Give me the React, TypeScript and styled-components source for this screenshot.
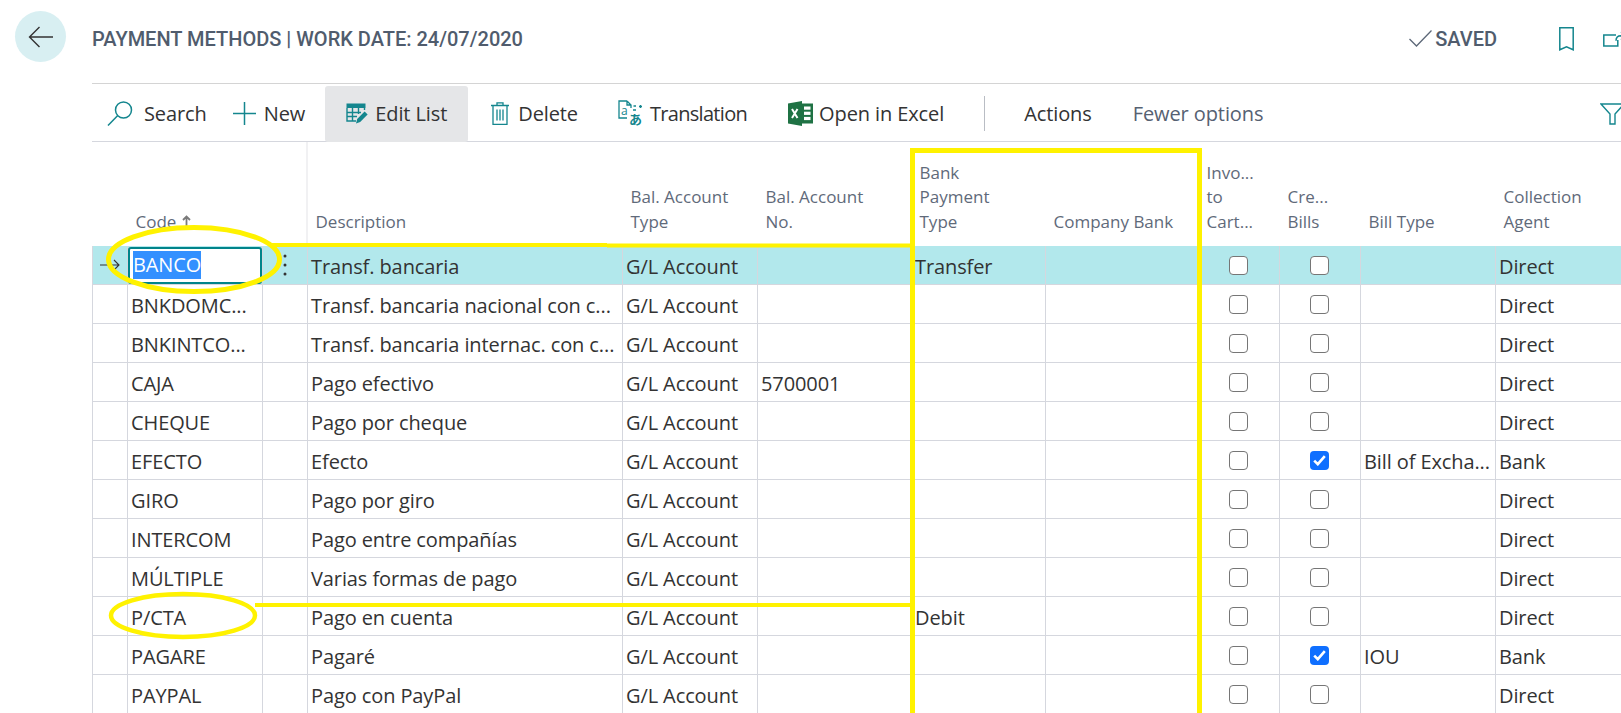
import React from 'react';
import styled, { createGlobalStyle } from 'styled-components';

const TEAL = '#14868e';
const GRID = '#d5d7de';
const COLUMNS = '36px 135px 45px 315px 135px 154px 134px 153px 81px 81px 135px 160px';

const GlobalStyle = createGlobalStyle`
  html, body {
    margin: 0;
    padding: 0;
    height: 100%;
    background: #fff;
    overflow: hidden;
  }
  body {
    font-family: "Open Sans", "Noto Sans", sans-serif;
    color: #333;
  }
  * { box-sizing: border-box; }
`;

const Page = styled.div`
  position: relative;
  display: flex;
  width: 1621px;
  height: 713px;
  overflow: hidden;
`;

const BackColumn = styled.div`
  flex: 0 0 92px;
  padding: 11px 0 0 15px;
`;

const BackButton = styled.button`
  width: 51px;
  height: 51px;
  padding: 0;
  border: 0;
  border-radius: 50%;
  background: #d8eff2;
  display: flex;
  align-items: center;
  justify-content: center;
`;

const Main = styled.main`
  flex: 0 0 1529px;
  min-width: 0;
`;

const TitleBar = styled.header`
  width: 1535px;
  height: 84px;
  display: flex;
  align-items: center;
  padding-bottom: 6px;
  border-bottom: 1px solid #d4d4d4;
`;

const Title = styled.h1`
  margin: 0;
  font-family: Roboto, "Liberation Sans", sans-serif;
  font-size: 20px;
  font-weight: 500;
  color: #505c6d;
  white-space: nowrap;
`;

const Saved = styled.div`
  margin-left: auto;
  display: flex;
  align-items: center;
  gap: 3px;
  font-family: Roboto, "Liberation Sans", sans-serif;
  font-size: 20px;
  font-weight: 500;
  color: #505c6d;
`;

const TitleIcons = styled.div`
  display: flex;
  align-items: center;
  gap: 29px;
  margin-left: 62px;
`;

const Toolbar = styled.nav`
  width: 1529px;
  height: 58px;
  padding-top: 2px;
  display: flex;
  align-items: center;
  border-bottom: 1px solid ${GRID};
  font-size: 20px;
`;

const ToolButton = styled.div<{
  $left?: number;
  $active?: boolean;
  $gap?: number;
  $muted?: boolean;
  $tight?: boolean;
}>`
  height: ${(p) => (p.$active ? '56px' : 'auto')};
  margin-left: ${(p) => p.$left ?? 0}px;
  padding: 0 ${(p) => (p.$active ? 21 : 0)}px;
  display: flex;
  align-items: center;
  gap: ${(p) => p.$gap ?? 8}px;
  white-space: nowrap;
  border-radius: 3px;
  background: ${(p) => (p.$active ? '#e5e6e8' : 'transparent')};
  color: ${(p) => (p.$muted ? '#566172' : '#333')};
  letter-spacing: ${(p) => (p.$tight ? '-0.7px' : '-0.1px')};
`;

const ToolDivider = styled.div`
  width: 1px;
  height: 35px;
  margin-left: 40px;
  background: #b9bdc4;
`;

const FilterSlot = styled.div`
  margin-left: auto;
  margin-right: -4px;
  display: flex;
`;

const HeaderRow = styled.div`
  display: grid;
  grid-template-columns: ${COLUMNS};
  height: 104px;
`;

const HeaderCell = styled.div<{ $divider?: boolean }>`
  display: flex;
  flex-direction: column;
  justify-content: flex-end;
  padding: 0 0 12px 7.5px;
  font-size: 17px;
  line-height: 24.4px;
  color: #5f6a7a;
  white-space: nowrap;
  border-right: ${(p) => (p.$divider ? '2px solid #f1f1f3' : '0')};
`;

const SortLabel = styled.span`
  display: flex;
  align-items: center;
  gap: 6px;
`;

const Row = styled.div<{ $current?: boolean }>`
  display: grid;
  grid-template-columns: ${COLUMNS};
  height: 39px;
  background: ${(p) => (p.$current ? '#b2e8ec' : '#fff')};
`;

const Cell = styled.div<{ $first?: boolean; $center?: boolean }>`
  display: flex;
  align-items: center;
  justify-content: ${(p) => (p.$center ? 'center' : 'flex-start')};
  min-width: 0;
  padding: ${(p) => (p.$center ? '0 1px 0 0' : '2px 0 0 3px')};
  font-size: 20px;
  letter-spacing: -0.1px;
  color: #333;
  white-space: nowrap;
  overflow: hidden;
  border-right: 1px solid ${GRID};
  border-bottom: 1px solid ${GRID};
  border-left: ${(p) => (p.$first ? `1px solid ${GRID}` : '0')};
`;

const CodeInput = styled.div`
  width: 134px;
  height: 37px;
  margin: -2px 0 0 -3px;
  padding-left: 3px;
  display: flex;
  align-items: center;
  background: #fff;
  border: 2px solid #00848a;
  border-radius: 3px;
`;

const Selection = styled.span`
  height: 28px;
  line-height: 28px;
  background: #3390ff;
  color: #fff;
`;

const Check = styled.span<{ $on?: boolean }>`
  width: 19px;
  height: 19px;
  display: flex;
  align-items: center;
  justify-content: center;
  border-radius: 4px;
  background: ${(p) => (p.$on ? '#0f6fff' : '#fff')};
  border: ${(p) => (p.$on ? '0' : '1.5px solid #767676')};
`;

const Annotations = styled.svg`
  position: absolute;
  top: 0;
  left: 0;
  pointer-events: none;
`;

type Method = {
  code: string;
  description: string;
  no?: string;
  bank?: string;
  credit?: boolean;
  billType?: string;
  agent: string;
};

const methods: Method[] = [
  { code: 'BANCO', description: 'Transf. bancaria', bank: 'Transfer', agent: 'Direct' },
  { code: 'BNKDOMC...', description: 'Transf. bancaria nacional con c...', agent: 'Direct' },
  { code: 'BNKINTCO...', description: 'Transf. bancaria internac. con c...', agent: 'Direct' },
  { code: 'CAJA', description: 'Pago efectivo', no: '5700001', agent: 'Direct' },
  { code: 'CHEQUE', description: 'Pago por cheque', agent: 'Direct' },
  { code: 'EFECTO', description: 'Efecto', credit: true, billType: 'Bill of Excha...', agent: 'Bank' },
  { code: 'GIRO', description: 'Pago por giro', agent: 'Direct' },
  { code: 'INTERCOM', description: 'Pago entre compañías', agent: 'Direct' },
  { code: 'MÚLTIPLE', description: 'Varias formas de pago', agent: 'Direct' },
  { code: 'P/CTA', description: 'Pago en cuenta', bank: 'Debit', agent: 'Direct' },
  { code: 'PAGARE', description: 'Pagaré', credit: true, billType: 'IOU', agent: 'Bank' },
  { code: 'PAYPAL', description: 'Pago con PayPal', agent: 'Direct' },
];

const headers: string[][] = [
  ['Bal. Account', 'Type'],
  ['Bal. Account', 'No.'],
  ['Bank', 'Payment', 'Type'],
  ['Company Bank'],
  ['Invo...', 'to', 'Cart...'],
  ['Cre...', 'Bills'],
  ['Bill Type'],
  ['Collection', 'Agent'],
];

const BackArrow = () => (
  <svg width="26" height="22" viewBox="0 0 26 22" fill="none" stroke="#333" strokeWidth="1.4">
    <path d="M1.5 11H25M11.5 1L1.5 11l10 10" />
  </svg>
);

const SearchIcon = () => (
  <svg width="26" height="25" viewBox="0 0 26 25" fill="none" stroke={TEAL} strokeWidth="1.5">
    <circle cx="16.5" cy="9" r="8" />
    <path d="M10.5 14.8L1 24.5" />
  </svg>
);

const PlusIcon = () => (
  <svg width="23" height="23" viewBox="0 0 23 23" fill="none" stroke={TEAL} strokeWidth="1.5">
    <path d="M0 11.5h23M11.5 0v23" />
  </svg>
);

const EditListIcon = () => (
  <svg width="22" height="21" viewBox="0 0 22 21" fill="none">
    <rect x="0.5" y="0.5" width="19" height="4.5" fill={TEAL} />
    <path
      d="M1 5v13h9M1 9.5h14M1 13.5h10M6.5 5v13M12.5 5v6M18.5 5v2"
      stroke={TEAL}
      strokeWidth="1.4"
    />
    <path d="M10 20.5l1.2-4.6 7.4-7.4 3 3-7.4 7.4z" fill={TEAL} />
  </svg>
);

const TrashIcon = () => (
  <svg width="18" height="23" viewBox="0 0 18 23" fill="none" stroke={TEAL} strokeWidth="1.3">
    <path d="M0 3.5h18M6 3.5V.8h6v2.7M2 3.5v18.8h14V3.5M6 7.5v11M9 7.5v11M12 7.5v11" />
  </svg>
);

const TranslationIcon = () => (
  <svg width="25" height="28" viewBox="0 0 25 28" fill="none" stroke={TEAL} strokeWidth="1.3">
    <path d="M9 1H1v17h8M9 1l4 4v3M9 1v4h4" />
    <path d="M15.5 6h2.5M21 6.5h3M22.5 5v3M15 10h3" />
    <text x="3" y="15" fontSize="12" fill={TEAL} stroke="none" fontFamily='"Open Sans", sans-serif'>
      a
    </text>
    <text x="11" y="24" fontSize="13" fontWeight="700" fill={TEAL} stroke="none" fontFamily='"Noto Sans CJK JP", sans-serif'>
      あ
    </text>
  </svg>
);

const ExcelIcon = () => (
  <svg width="25" height="25" viewBox="0 0 25 25">
    <rect x="9" y="2.5" width="16" height="20" fill="#1f7244" />
    <rect x="16" y="5.5" width="6.5" height="3.2" fill="#fff" />
    <rect x="16" y="10.7" width="6.5" height="3.2" fill="#fff" />
    <rect x="16" y="15.9" width="6.5" height="3.2" fill="#fff" />
    <path d="M0 2.5L14 0v25L0 22.5z" fill="#1f7244" />
    <path d="M4 8l5.5 9M9.5 8L4 17" stroke="#fff" strokeWidth="2" />
  </svg>
);

const CheckMark = () => (
  <svg width="23" height="17" viewBox="0 0 23 17" fill="none" stroke="#5d6878" strokeWidth="1.3">
    <path d="M0.5 9l7 7L22.5 0.5" />
  </svg>
);

const BookmarkIcon = () => (
  <svg width="15" height="24" viewBox="0 0 15 24" fill="none" stroke={TEAL} strokeWidth="1.5">
    <path d="M.8.8h13.4v22l-6.7-3-6.7 3z" />
  </svg>
);

const ShareIcon = () => (
  <svg width="24" height="16" viewBox="0 0 24 16" fill="none" stroke={TEAL} strokeWidth="1.5">
    <path d="M13 4H.8v11h14V9M18 .8l5 4-5 4M23 4.8h-5c-3 0-5 2-5 5" />
  </svg>
);

const FilterIcon = () => (
  <svg width="25" height="22" viewBox="0 0 25 22" fill="none" stroke={TEAL} strokeWidth="1.4">
    <path d="M1 1h23l-9 10v10h-5V11z" />
  </svg>
);

const SortArrow = () => (
  <svg width="9" height="13" viewBox="0 0 9 13" fill="none" stroke="#7a7a7a" strokeWidth="1.8">
    <path d="M4.5 13V1.5M1 5l3.5-3.5L8 5" />
  </svg>
);

const RowArrow = () => (
  <svg width="20" height="12" viewBox="0 0 20 12" fill="none" stroke="#333" strokeWidth="1.1">
    <path d="M0 6h19M14 1l5 5-5 5" />
  </svg>
);

const Kebab = () => (
  <svg width="4" height="24" viewBox="0 0 4 24" fill="#333">
    <circle cx="2" cy="3" r="1.5" />
    <circle cx="2" cy="12" r="1.5" />
    <circle cx="2" cy="21" r="1.5" />
  </svg>
);

const Tick = () => (
  <svg width="13" height="11" viewBox="0 0 13 11" fill="none" stroke="#fff" strokeWidth="2.6">
    <path d="M1.2 5.6l3.6 3.6L11.8 1.2" />
  </svg>
);

function App() {
  return (
    <Page>
      <GlobalStyle />
      <BackColumn>
        <BackButton aria-label="Back">
          <BackArrow />
        </BackButton>
      </BackColumn>

      <Main>
        <TitleBar>
          <Title>PAYMENT METHODS | WORK DATE: 24/07/2020</Title>
          <Saved>
            <CheckMark />
            SAVED
          </Saved>
          <TitleIcons>
            <BookmarkIcon />
            <ShareIcon />
          </TitleIcons>
        </TitleBar>

        <Toolbar>
          <ToolButton $left={15} $gap={11}>
            <SearchIcon />
            Search
          </ToolButton>
          <ToolButton $left={26}>
            <PlusIcon />
            New
          </ToolButton>
          <ToolButton $left={20} $active $gap={7}>
            <EditListIcon />
            Edit List
          </ToolButton>
          <ToolButton $left={23} $gap={9}>
            <TrashIcon />
            Delete
          </ToolButton>
          <ToolButton $left={40} $gap={7} $tight>
            <TranslationIcon />
            Translation
          </ToolButton>
          <ToolButton $left={41} $gap={6}>
            <ExcelIcon />
            Open in Excel
          </ToolButton>
          <ToolDivider />
          <ToolButton $left={39}>Actions</ToolButton>
          <ToolButton $left={41} $muted>
            Fewer options
          </ToolButton>
          <FilterSlot>
            <FilterIcon />
          </FilterSlot>
        </Toolbar>

        <HeaderRow>
          <HeaderCell />
          <HeaderCell>
            <SortLabel>
              Code <SortArrow />
            </SortLabel>
          </HeaderCell>
          <HeaderCell $divider />
          <HeaderCell>Description</HeaderCell>
          {headers.map((lines) => (
            <HeaderCell key={lines.join(' ')}>
              {lines.map((line) => (
                <span key={line}>{line}</span>
              ))}
            </HeaderCell>
          ))}
        </HeaderRow>

        {methods.map((m, i) => (
          <Row key={m.code} $current={i === 0}>
            <Cell $first $center>
              {i === 0 && <RowArrow />}
            </Cell>
            <Cell>
              {i === 0 ? (
                <CodeInput>
                  <Selection>{m.code}</Selection>
                </CodeInput>
              ) : (
                m.code
              )}
            </Cell>
            <Cell $center>{i === 0 && <Kebab />}</Cell>
            <Cell>{m.description}</Cell>
            <Cell>G/L Account</Cell>
            <Cell>{m.no}</Cell>
            <Cell>{m.bank}</Cell>
            <Cell />
            <Cell $center>
              <Check />
            </Cell>
            <Cell $center>
              <Check $on={m.credit}>{m.credit && <Tick />}</Check>
            </Cell>
            <Cell>{m.billType}</Cell>
            <Cell>{m.agent}</Cell>
          </Row>
        ))}
      </Main>

      <Annotations width="1621" height="713" viewBox="0 0 1621 713" fill="none" stroke="#fff200">
        <rect x="912.5" y="150.5" width="287" height="575" strokeWidth="5" />
        <ellipse cx="194" cy="259.5" rx="85.5" ry="32" strokeWidth="5" />
        <ellipse cx="183" cy="615.5" rx="72" ry="21.5" strokeWidth="4.5" />
        <path d="M270 245H607M607 245.5H912" strokeWidth="4" />
        <path d="M255 605H912" strokeWidth="4" />
      </Annotations>
    </Page>
  );
}

export default App;
